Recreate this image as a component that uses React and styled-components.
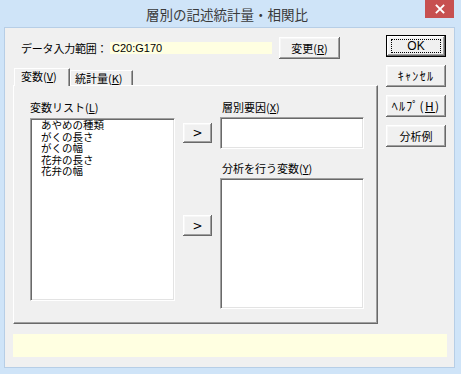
import React from 'react';
import styled, { createGlobalStyle } from 'styled-components';

const FONT = `"Noto Sans CJK JP", "Noto Sans", sans-serif`;

const Global = createGlobalStyle`
  html, body { margin: 0; padding: 0; background: #cfe4f8; }
  * { box-sizing: border-box; }
  body { font-family: ${FONT}; }
`;

const Window = styled.div`
  width: 461px;
  height: 374px;
  background: #cfe4f8;
  display: flex;
  flex-direction: column;
  overflow: hidden;
`;

const TitleBar = styled.div`
  height: 28px;
  display: grid;
  grid-template-columns: 1fr auto 1fr;
  align-items: start;
  padding-right: 7px;
`;

const Title = styled.div`
  grid-column: 2;
  font-size: 13.5px;
  color: #3a3a3a;
  line-height: 28px;
  white-space: nowrap;
`;

const Close = styled.div`
  grid-column: 3;
  justify-self: end;
  width: 29px;
  height: 18px;
  background: #c75050;
  display: flex;
  align-items: center;
  justify-content: center;
`;

const Client = styled.div`
  margin: 0 7px 0 5px;
  height: 339px;
  background: #f0f0f0;
  box-shadow: 0 0 0 1px #b7cee6;
  display: flex;
  flex-direction: column;
  padding: 7px 7px 0 8px;
  font-size: 11px;
  color: #000;
`;

const TopArea = styled.div`
  display: flex;
  align-items: flex-start;
`;

const Main = styled.div`
  width: 365px;
  display: flex;
  flex-direction: column;
`;

const HeaderRow = styled.div`
  margin-top: 2px;
  height: 22px;
  display: flex;
  align-items: center;
  padding-left: 8px;
`;

const FieldLabel = styled.span`
  width: 89px;
  white-space: nowrap;
  font-size: 11px;
  letter-spacing: -0.2px;
`;

const RangeField = styled.div`
  width: 162px;
  height: 12px;
  background: #ffffe1;
  font-size: 11px;
  line-height: 12px;
  padding-left: 2px;
  font-family: "Liberation Sans", Arial, sans-serif;
`;

const Button = styled.button`
  width: ${(p) => p.$w || 60}px;
  height: ${(p) => p.$h || 22}px;
  margin-left: ${(p) => p.$ml || 0}px;
  padding: 0;
  background: #f0f0f0;
  font-family: ${FONT};
  font-size: 11px;
  color: #000;
  border: ${(p) => (p.$default ? '1px solid #000' : 'none')};
  box-shadow: inset -1px -1px 0 #696969, inset 1px 1px 0 #ffffff,
    inset -2px -2px 0 #a0a0a0, inset 2px 2px 0 #f7f7f7;
  display: flex;
  align-items: center;
  justify-content: center;
  flex-shrink: 0;
  line-height: 1;
`;

const Focus = styled.span`
  width: 50px;
  height: 14px;
  border: 1px dotted #000;
  display: flex;
  align-items: center;
  justify-content: center;
  font-family: "Liberation Sans", Arial, sans-serif;
  font-size: 12px;
`;

const TabStrip = styled.div`
  margin-top: 9px;
  height: 17px;
  display: flex;
  align-items: flex-end;
  padding-left: 1px;
`;

const Tab = styled.div`
  width: ${(p) => p.$w}px;
  height: ${(p) => (p.$active ? 18 : 15)}px;
  margin-bottom: ${(p) => (p.$active ? -1 : 0)}px;
  position: relative;
  z-index: ${(p) => (p.$active ? 1 : 0)};
  background: #f0f0f0;
  border-top: 1px solid #fff;
  border-left: 1px solid #fff;
  border-right: 1px solid #696969;
  box-shadow: inset -1px 0 0 #a0a0a0;
  font-size: 11px;
  line-height: 14px;
  padding-left: ${(p) => (p.$active ? 6 : 4)}px;
  white-space: nowrap;
`;

const Panel = styled.div`
  width: 365px;
  height: 239px;
  border-top: 1px solid #fff;
  border-left: 1px solid #fff;
  border-right: 1px solid #696969;
  border-bottom: 1px solid #696969;
  box-shadow: inset -1px -1px 0 #a0a0a0;
  display: flex;
  align-items: flex-start;
  padding: 14px 0 0 16px;
`;

const Column = styled.div`
  width: ${(p) => p.$w}px;
  margin-left: ${(p) => p.$ml || 0}px;
  display: flex;
  flex-direction: column;
`;

const BoxLabel = styled.div`
  height: 14px;
  line-height: 14px;
  font-size: 11px;
  margin-top: ${(p) => p.$mt || 0}px;
  padding-left: ${(p) => p.$pl || 0}px;
  white-space: nowrap;
`;

const Sunken = styled.div`
  height: ${(p) => p.$h}px;
  margin-top: ${(p) => p.$mt}px;
  background: #fff;
  border-top: 1px solid #a0a0a0;
  border-left: 1px solid #a0a0a0;
  border-bottom: 1px solid #fff;
  border-right: 1px solid #fff;
  box-shadow: inset 1px 1px 0 #696969, inset -1px -1px 0 #e3e3e3;
  padding: 0 0 0 10px;
`;

const ListItem = styled.div`
  font-size: 10.5px;
  line-height: 11.5px;
  height: 11.5px;
  white-space: nowrap;
`;

const ArrowColumn = styled.div`
  width: 29px;
  margin-left: 8px;
  padding-top: 23px;
  display: flex;
  flex-direction: column;
`;

const Arrow = styled(Button)`
  margin-top: ${(p) => p.$mt || 0}px;
  font-family: "DejaVu Sans", sans-serif;
  font-size: 12px;
`;

const ButtonColumn = styled.div`
  width: 60px;
  margin-left: 8px;
  display: flex;
  flex-direction: column;
  gap: 8px;
`;

const StatusBar = styled.div`
  margin-top: 10px;
  height: 23px;
  background: #ffffe1;
`;

const Half = styled.span`
  font-size: 12px;
  letter-spacing: 1.3px;
`;

export default function App() {
  const items = ['あやめの種類', 'がくの長さ', 'がくの幅', '花弁の長さ', '花弁の幅'];
  return (
    <>
      <Global />
      <Window>
        <TitleBar>
          <Title>層別の記述統計量・相関比</Title>
          <Close>
            <svg width="10" height="10" viewBox="0 0 10 10">
              <path d="M1.5 1.5 L8.5 8.5 M8.5 1.5 L1.5 8.5" stroke="#fff" strokeWidth="1.8" strokeLinecap="square" />
            </svg>
          </Close>
        </TitleBar>
        <Client>
          <TopArea>
            <Main>
              <HeaderRow>
                <FieldLabel>データ入力範囲：</FieldLabel>
                <RangeField>C20:G170</RangeField>
                <Button $w={61} $ml={7}>
                  変更(<u>R</u>)
                </Button>
              </HeaderRow>
              <TabStrip>
                <Tab $active $w={56}>
                  変数(<u>V</u>)
                </Tab>
                <Tab $w={63}>
                  統計量(<u>K</u>)
                </Tab>
              </TabStrip>
              <Panel>
                <Column $w={145}>
                  <BoxLabel>
                    変数リスト(<u>L</u>)
                  </BoxLabel>
                  <Sunken $h={183} $mt={4}>
                    {items.map((it) => (
                      <ListItem key={it}>{it}</ListItem>
                    ))}
                  </Sunken>
                </Column>
                <ArrowColumn>
                  <Arrow $w={29} $h={20}>&gt;</Arrow>
                  <Arrow $w={29} $h={21} $mt={72}>&gt;</Arrow>
                </ArrowColumn>
                <Column $w={144} $ml={8}>
                  <BoxLabel $pl={2}>
                    層別要因(<u>X</u>)
                  </BoxLabel>
                  <Sunken $h={32} $mt={3} />
                  <BoxLabel $mt={12} $pl={2}>
                    分析を行う変数(<u>Y</u>)
                  </BoxLabel>
                  <Sunken $h={131} $mt={3} />
                </Column>
              </Panel>
            </Main>
            <ButtonColumn>
              <Button $default>
                <Focus>OK</Focus>
              </Button>
              <Button>
                <Half>ｷｬﾝｾﾙ</Half>
              </Button>
              <Button>
                <Half>
                  ﾍﾙﾌﾟ(<u>H</u>)
                </Half>
              </Button>
              <Button>分析例</Button>
            </ButtonColumn>
          </TopArea>
          <StatusBar />
        </Client>
      </Window>
    </>
  );
}
